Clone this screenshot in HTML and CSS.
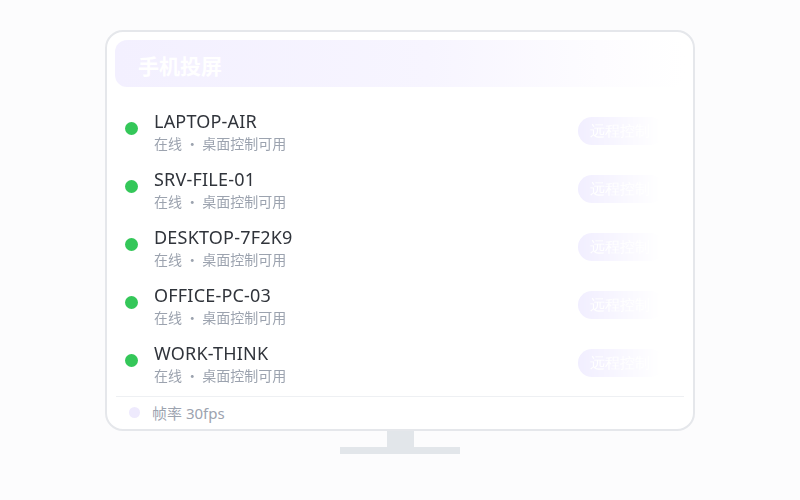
FILE: index.html
```html
<!DOCTYPE html>
<html lang="zh">
<head>
<meta charset="utf-8">
<title>手机投屏</title>
<link rel="stylesheet" href="styles.css">
</head>
<body>
<div class="stage">
  <div class="monitor">
    <div class="header">手机投屏</div>
    <div class="list">
      <div class="row">
        <span class="dot"></span>
        <div class="info"><div class="name">LAPTOP-AIR</div><div class="sub">在线 · 桌面控制可用</div></div>
        <button class="btn">远程控制</button>
      </div>
      <div class="row">
        <span class="dot"></span>
        <div class="info"><div class="name">SRV-FILE-01</div><div class="sub">在线 · 桌面控制可用</div></div>
        <button class="btn">远程控制</button>
      </div>
      <div class="row">
        <span class="dot"></span>
        <div class="info"><div class="name">DESKTOP-7F2K9</div><div class="sub">在线 · 桌面控制可用</div></div>
        <button class="btn">远程控制</button>
      </div>
      <div class="row">
        <span class="dot"></span>
        <div class="info"><div class="name">OFFICE-PC-03</div><div class="sub">在线 · 桌面控制可用</div></div>
        <button class="btn">远程控制</button>
      </div>
      <div class="row">
        <span class="dot"></span>
        <div class="info"><div class="name">WORK-THINK</div><div class="sub">在线 · 桌面控制可用</div></div>
        <button class="btn">远程控制</button>
      </div>
    </div>
    <div class="footer"><span class="fdot"></span><span class="ftext">帧率 30fps</span></div>
  </div>
  <div class="neck"></div>
  <div class="base"></div>
</div>
</body>
</html>
```

FILE: styles.css
```css
html, body {
  margin: 0;
  padding: 0;
  background: #fcfcfd;
}
body {
  font-family: "Noto Sans", "Noto Sans CJK SC", sans-serif;
}
.stage {
  width: 800px;
  height: 500px;
  padding-top: 30px;
  box-sizing: border-box;
  display: flex;
  flex-direction: column;
  align-items: center;
}
.monitor {
  width: 590px;
  height: 401px;
  box-sizing: border-box;
  border: 2px solid #e5e7eb;
  border-radius: 18px;
  background: #ffffff;
  padding: 8px 8px 0 8px;
  display: flex;
  flex-direction: column;
  overflow: hidden;
}
.header {
  height: 47px;
  border-radius: 12px;
  background: linear-gradient(to right, #f3f0ff 0%, #f7f5ff 55%, #fdfcff 85%, #ffffff 100%);
  color: #ffffff;
  font-family: "Noto Sans CJK SC", sans-serif;
  font-weight: 700;
  font-size: 21px;
  line-height: 50px;
  padding-left: 23px;
  flex: none;
}
.list {
  margin-top: 16px;
  display: flex;
  flex-direction: column;
  padding-bottom: 3px;
  -webkit-mask-image: linear-gradient(to right, #000 0, #000 462px, transparent 545px);
  mask-image: linear-gradient(to right, #000 0, #000 462px, transparent 545px);
}
.row {
  height: 58px;
  box-sizing: border-box;
  display: flex;
  align-items: center;
  padding-left: 10px;
}
.dot {
  width: 13px;
  height: 13px;
  border-radius: 50%;
  background: #34c759;
  flex: none;
  margin-bottom: 8px;
  margin-right: 16px;
}
.info {
  flex: 1;
  display: flex;
  flex-direction: column;
}
.name {
  font-size: 18px;
  line-height: 22px;
  color: #30343b;
  letter-spacing: 0.2px;
}
.sub {
  font-family: "Noto Sans CJK SC", sans-serif;
  font-size: 14px;
  line-height: 22px;
  color: #9ca3af;
}
.btn {
  flex: none;
  height: 28px;
  width: 86px;
  border: none;
  border-radius: 14px;
  background: #f1eeff;
  color: #ffffff;
  font-family: serif;
  font-size: 15px;
  padding: 0 0 0 12px;
  text-align: left;
  margin-right: 21px;
  margin-bottom: 2px;
}
.footer {
  border-top: 1px solid #eef0f3;
  margin: 0 1px;
  display: flex;
  align-items: center;
  padding-top: 2px;
  height: 26px;
  padding-left: 13px;
}
.fdot {
  width: 11px;
  height: 11px;
  border-radius: 50%;
  background: #eeeafd;
  margin-right: 12px;
  flex: none;
}
.ftext {
  font-family: "Noto Sans", "Noto Sans CJK SC", sans-serif;
  font-size: 15px;
  color: #9ca3af;
}
.neck {
  width: 27px;
  height: 16px;
  background: #e2e6ea;
  flex: none;
}
.base {
  width: 120px;
  height: 7px;
  background: #e2e6ea;
  flex: none;
}
```
